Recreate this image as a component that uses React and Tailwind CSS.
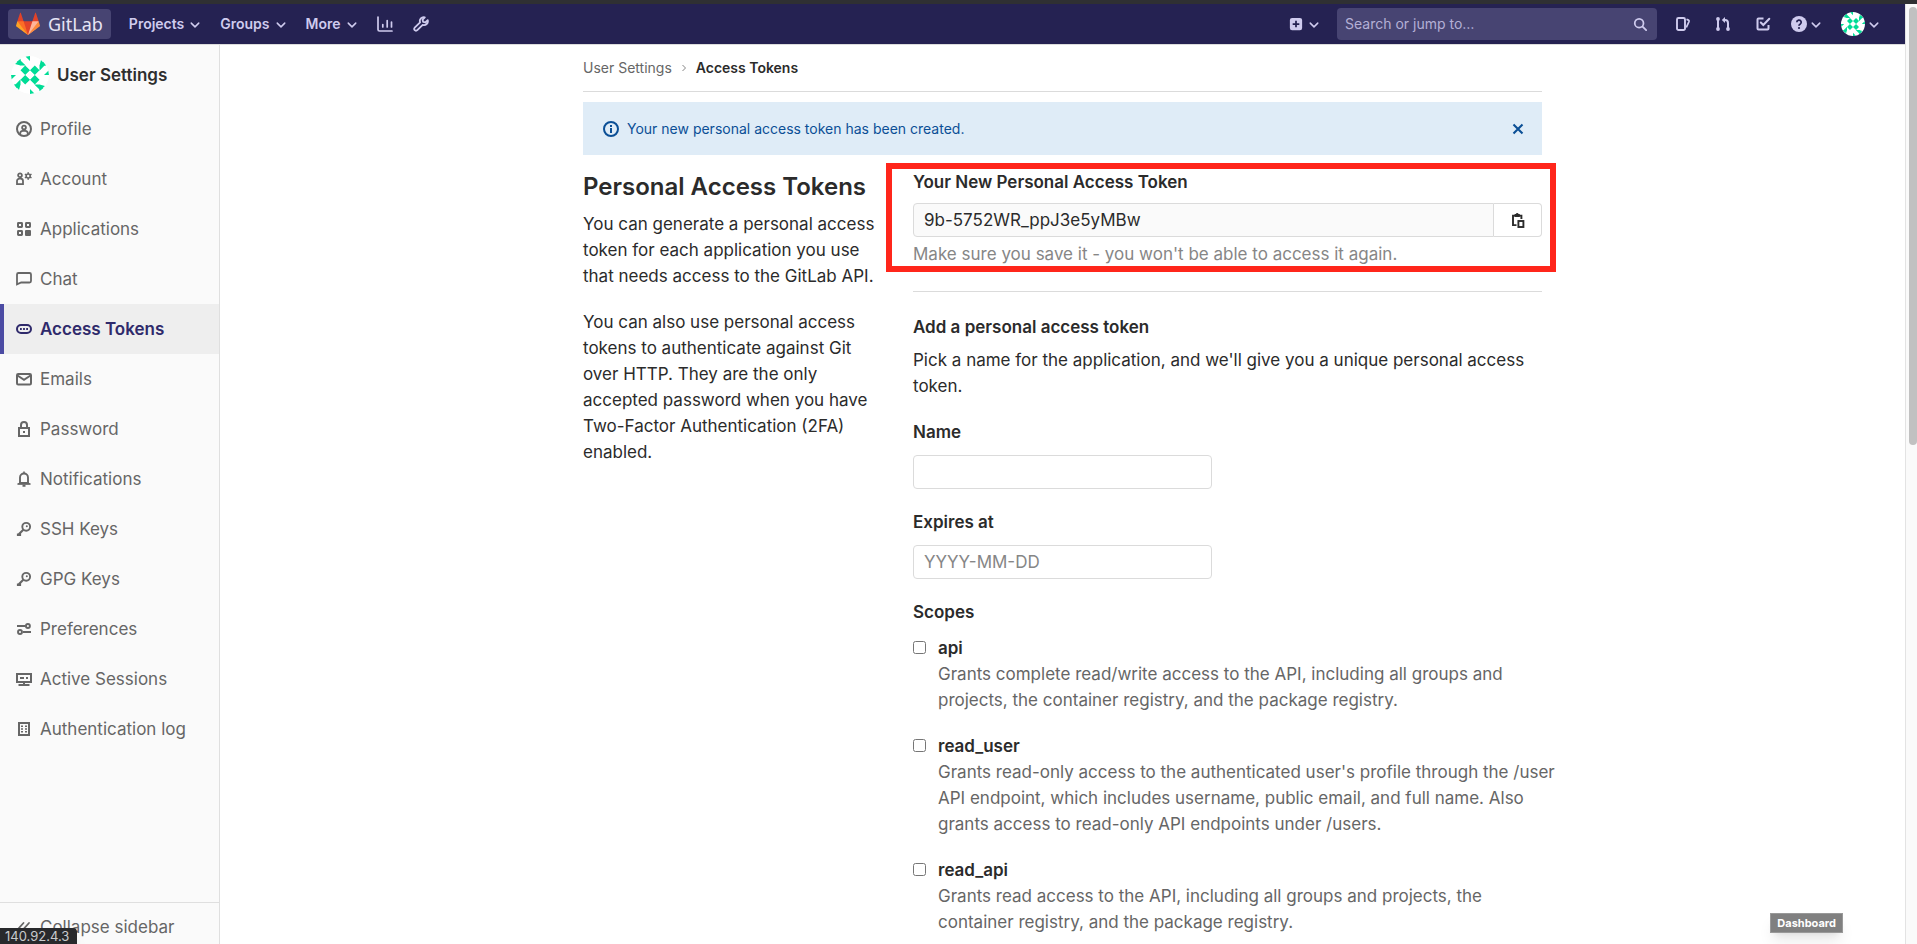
import React from "react";

function Svg({ size = 16, className = "", children }) {
  return (
    <svg
      viewBox="0 0 16 16"
      width={size}
      height={size}
      fill="none"
      stroke="currentColor"
      strokeWidth="2"
      aria-hidden="true"
      className={`shrink-0 ${className}`}
    >
      {children}
    </svg>
  );
}

const icons = {
  profile: (
    <>
      <circle cx="8" cy="8" r="7" />
      <circle cx="8" cy="6.6" r="1.9" strokeWidth="1.8" />
      <path d="M4.2 13.2V12.4a2.6 2.6 0 0 1 2.6-2.6h2.4a2.6 2.6 0 0 1 2.6 2.6v.8" strokeWidth="1.8" />
    </>
  ),
  account: (
    <>
      <circle cx="4" cy="4.3" r="1.9" strokeWidth="1.8" />
      <path d="M1 13.2V10a2.4 2.4 0 0 1 2.4-2.4h1.2A2.4 2.4 0 0 1 7 10v3.2z" strokeWidth="1.8" />
      <circle cx="12.2" cy="5" r="2" strokeWidth="1.6" />
      <path d="M12.2 1.2v1.6M12.2 7.2v1.6M8.9 3.1l1.4.8M14.1 6.1l1.4.8M8.9 6.9l1.4-.8M14.1 3.9l1.4-.8" strokeWidth="1.6" />
    </>
  ),
  applications: (
    <>
      <rect x="2" y="2" width="4" height="4" rx=".4" />
      <rect x="10" y="2" width="4" height="4" rx=".4" />
      <rect x="2" y="10" width="4" height="4" rx=".4" />
      <rect x="9" y="9" width="6" height="6" rx="1" fill="currentColor" stroke="none" />
    </>
  ),
  chat: <path d="M1 13.4V3.5A1.5 1.5 0 0 1 2.5 2h11A1.5 1.5 0 0 1 15 3.5v6.5a1.5 1.5 0 0 1-1.5 1.5H5.2z" strokeWidth="1.8" />,
  token: (
    <>
      <rect x="1" y="4" width="14" height="8" rx="4" />
      <path d="M4 8h1.8M7.1 8h1.8M10.2 8H12" />
    </>
  ),
  mail: (
    <>
      <rect x="1" y="3" width="14" height="10.5" rx="1.2" />
      <path d="M1.5 4.5L8 8.8l6.5-4.3" />
    </>
  ),
  lock: (
    <>
      <rect x="3" y="7" width="10" height="8" />
      <path d="M5 7V4a3 3 0 0 1 6 0v3" />
      <path d="M7 11h2" />
    </>
  ),
  bell: (
    <>
      <path d="M4 12V6.5a4 4 0 0 1 8 0V12" strokeWidth="1.9" />
      <path d="M1.5 13.2L3.8 11h8.4l2.3 2.2z" fill="currentColor" stroke="none" />
      <path d="M1.5 13h13" strokeWidth="1.6" />
      <path d="M5.5 11h5V9.5h-5z" fill="#fafafa" stroke="none" />
      <path d="M6.5 14.7h3M7.2 1.6h1.6" />
    </>
  ),
  key: (
    <>
      <circle cx="10.2" cy="5.8" r="3.9" strokeWidth="1.9" />
      <circle cx="10.8" cy="5.2" r="1" fill="currentColor" stroke="none" />
      <path d="M7.3 8.7L1.8 14.2M2 14.9v-2.5M1 14h3v-2.2" strokeWidth="2.2" />
    </>
  ),
  preferences: (
    <>
      <path d="M1 5h8M7 11h8" />
      <circle cx="11.9" cy="5" r="2" strokeWidth="1.9" />
      <circle cx="4" cy="11" r="2" strokeWidth="1.9" />
    </>
  ),
  monitor: (
    <>
      <rect x="1" y="3" width="14" height="8" />
      <path d="M8 11v3M2.5 14h11M4 7h4M10 7h2" />
    </>
  ),
  log: (
    <>
      <rect x="3" y="2" width="10" height="12" />
      <path d="M5 5.2h2M9 5.2h2M5 8h2M9 8h2M5 10.8h2M9 10.8h2" strokeWidth="1.6" />
    </>
  ),
};

function Chevron() {
  return (
    <Svg size={10} className="mt-0.5">
      <path d="M2 5l6 6 6-6" strokeWidth="2.4" strokeLinecap="round" strokeLinejoin="round" />
    </Svg>
  );
}

function Identicon({ className }) {
  return (
    <svg viewBox="0 0 38 38" aria-hidden="true" className={className}>
      <circle cx="19" cy="19" r="19" fill="#fff" />
      <g fill="#00dc96">
        <path d="M14.2 9.5l4.8 4.7-4.8 4.8-4.7-4.8zM23.8 9.5l4.7 4.7-4.7 4.8-4.8-4.8zM14.2 19l4.8 4.8-4.8 4.7-4.7-4.7zM23.8 19l4.7 4.8-4.7 4.7-4.8-4.7z" />
        {[0, 90, 180, 270].map((angle) => (
          <g key={angle} transform={`rotate(${angle} 19 19)`}>
            <path d="M14.5 .4L19 0v5zM9.5 4.5l5.2 5H9.5zM30 4l4.5 5.500H28.500zM5.500 6L9.500 2.800v6.700z" />
          </g>
        ))}
      </g>
    </svg>
  );
}

function Tanuki() {
  return (
    <svg viewBox="0 0 36 36" aria-hidden="true" className="size-6 shrink-0">
      <path fill="#e24329" d="M2 14l9.38 9v-9l-4-12.28c-.205-.632-1.176-.632-1.38 0z" />
      <path fill="#e24329" d="M34 14l-9.38 9v-9l4-12.28c.205-.632 1.176-.632 1.38 0z" />
      <path fill="#e24329" d="M18 34.38L3 14h30z" />
      <path fill="#fc6d26" d="M18 34.38L11.38 14H2l4 11z" />
      <path fill="#ffb59a" d="M18 34.38L24.62 14H34l-4 11z" />
      <path fill="#fca326" d="M2 14L.1 20.16c-.18.565 0 1.2.5 1.56l17.42 12.66z" />
      <path fill="#fc8a3c" d="M34 14l1.9 6.16c.18.565 0 1.2-.5 1.56L18 34.38z" />
    </svg>
  );
}

const navItems = [
  ["Profile", "profile"],
  ["Account", "account"],
  ["Applications", "applications"],
  ["Chat", "chat"],
  ["Access Tokens", "token"],
  ["Emails", "mail"],
  ["Password", "lock"],
  ["Notifications", "bell"],
  ["SSH Keys", "key"],
  ["GPG Keys", "key"],
  ["Preferences", "preferences"],
  ["Active Sessions", "monitor"],
  ["Authentication log", "log"],
];

const scopes = [
  ["api", "Grants complete read/write access to the API, including all groups and projects, the container registry, and the package registry."],
  ["read_user", "Grants read-only access to the authenticated user's profile through the /user API endpoint, which includes username, public email, and full name. Also grants access to read-only API endpoints under /users."],
  ["read_api", "Grants read access to the API, including all groups and projects, the container registry, and the package registry."],
];

function Navbar() {
  return (
    <header className="flex h-[41px] shrink-0 items-center justify-between border-b border-[#dcdcdc] bg-[#252252] pr-[26px] pl-2 text-[#cfcbee]">
      <div className="flex items-center">
        <a href="#home" className="flex h-[30px] items-center gap-2 rounded bg-[#474472] px-2 font-['Noto_Sans',sans-serif] text-[18px] leading-6 text-[#e6e4f5]">
          <Tanuki />
          GitLab
        </a>
        <nav aria-label="Main" className="ml-[18px] flex items-center gap-5 text-sm font-semibold">
          {["Projects", "Groups", "More"].map((label) => (
            <button key={label} type="button" className="flex items-center gap-1.5">
              {label}
              <Chevron />
            </button>
          ))}
          <a href="#analytics" aria-label="Analytics">
            <Svg>
              <path d="M1 1v12.5A1.5 1.5 0 0 0 2.5 15H15" strokeLinecap="round" strokeWidth="1.7" />
              <path d="M5.8 8.5v2.5M10.2 4.5V11M14.5 6v5" strokeLinecap="round" strokeWidth="1.7" />
            </Svg>
          </a>
          <a href="#admin" aria-label="Admin area">
            <Svg>
              <path
                d="M11.8 1.3a3.8 3.8 0 0 0-4.7 5L1.7 11.6a1.8 1.8 0 0 0 0 2.6 1.8 1.8 0 0 0 2.6 0l5.4-5.4a3.8 3.8 0 0 0 5-4.7l-2.4 2.2-2.2-.4-.5-2.2z"
                strokeWidth="1.8"
                strokeLinejoin="round"
              />
            </Svg>
          </a>
        </nav>
      </div>
      <div className="flex items-center">
        <button type="button" aria-label="New" className="flex items-center gap-1.5">
          <Svg size={14}>
            <rect x="1" y="1" width="14" height="14" rx="2.5" fill="currentColor" stroke="none" />
            <path d="M8 4.2v7.6M4.2 8h7.6" stroke="#252252" />
          </Svg>
          <Chevron />
        </button>
        <div className="ml-[18px] flex h-8 w-[320px] items-center rounded bg-[#474472] pr-2.5 pl-2">
          <input aria-label="Search" placeholder="Search or jump to…" className="min-w-0 flex-1 bg-transparent text-sm outline-none placeholder:text-[#b4b0d6]" />
          <Svg size={14}>
            <circle cx="7" cy="7" r="5" />
            <path d="M11 11l4 4" strokeLinecap="round" />
          </Svg>
        </div>
        <div className="ml-[18px] flex items-center gap-6">
          <a href="#issues" aria-label="Issues">
            <Svg>
              <path d="M3.5 2h5A1.5 1.5 0 0 1 10 3.5v9A1.5 1.5 0 0 1 8.5 14h-5A1.5 1.5 0 0 1 2 12.5v-9A1.5 1.5 0 0 1 3.5 2z" strokeWidth="1.9" />
              <path d="M11.5 3.2l1.9.9a1.2 1.2 0 0 1 .6 1.4L11.3 11.5" strokeWidth="1.8" />
            </Svg>
          </a>
          <a href="#merge-requests" aria-label="Merge requests">
            <Svg>
              <path d="M3 4v9M13 13V7a3 3 0 0 0-3-3H8" />
              <path d="M10 1v6L6.8 4z" fill="currentColor" stroke="none" />
              <circle cx="3" cy="3" r="1.9" fill="currentColor" stroke="none" />
              <circle cx="3" cy="13" r="1.9" fill="currentColor" stroke="none" />
              <circle cx="13" cy="13" r="1.9" fill="currentColor" stroke="none" />
            </Svg>
          </a>
          <a href="#todos" aria-label="To-Do list">
            <Svg>
              <path d="M8.5 2.5h-5a1 1 0 0 0-1 1v9a1 1 0 0 0 1 1h9a1 1 0 0 0 1-1V9" />
              <path d="M5.8 6.5L8.3 9l6-6.3" strokeLinecap="round" />
            </Svg>
          </a>
        </div>
        <div className="ml-5 flex items-center gap-5">
          <button type="button" aria-label="Help" className="flex items-center gap-1">
            <Svg>
              <circle cx="8" cy="8" r="8" fill="currentColor" stroke="none" />
              <path d="M5.8 6.3a2.2 2.2 0 1 1 3.3 1.9c-.7.4-1.1.7-1.1 1.5" stroke="#252252" strokeWidth="1.8" />
              <circle cx="8" cy="12" r="1.1" fill="#252252" stroke="none" />
            </Svg>
            <Chevron />
          </button>
          <button type="button" aria-label="User menu" className="flex items-center gap-1">
            <Identicon className="size-6" />
            <Chevron />
          </button>
        </div>
      </div>
    </header>
  );
}

function Sidebar() {
  return (
    <aside className="flex w-[220px] shrink-0 flex-col border-r border-[#dfdfdf] bg-[#fafafa] text-[17px] leading-[26px] text-[#666]">
      <a href="#settings" className="flex h-[59px] items-center gap-2 pl-[11px] font-semibold text-[#2e2e2e]">
        <Identicon className="size-[38px] rounded-full" />
        User Settings
      </a>
      <nav aria-label="User settings" className="flex-1">
        {navItems.map(([label, icon]) => {
          const active = label === "Access Tokens";
          return (
            <a
              key={label}
              href="#nav"
              aria-current={active ? "page" : undefined}
              className={
                active
                  ? "flex h-[50px] items-center gap-2 border-l-4 border-[#4b4ba3] bg-[#eeeeee] pl-3 font-semibold text-[#2f2a6b]"
                  : "flex h-[50px] items-center gap-2 pl-4"
              }
            >
              <Svg>{icons[icon]}</Svg>
              {label}
            </a>
          );
        })}
      </nav>
      <button type="button" className="flex h-[42px] shrink-0 items-start gap-2 border-t border-[#dfdfdf] pt-[11px] pl-4">
        <Svg className="mt-1.5">
          <path d="M7.5 3L3 8l4.5 5M13 3L8.5 8l4.5 5" strokeWidth="1.8" strokeLinecap="round" />
        </Svg>
        Collapse sidebar
      </button>
    </aside>
  );
}

const field = "block h-[34px] rounded border border-[#dbdbdb] px-2.5 placeholder:text-[#868686]";

function TokenForm() {
  return (
    <div className="min-w-0 flex-1">
      <section className="relative">
        <label htmlFor="token" className="block font-semibold">
          Your New Personal Access Token
        </label>
        <div className="mt-2 flex">
          <input id="token" readOnly value="9b-5752WR_ppJ3e5yMBw" className="h-[34px] min-w-0 flex-1 rounded-l border border-[#dbdbdb] bg-[#fafafa] px-2.5" />
          <button type="button" aria-label="Copy personal access token" className="flex h-[34px] w-12 items-center justify-center rounded-r border border-l-0 border-[#dbdbdb]">
            <Svg>
              <path d="M6.5 13.1H3V3.6h8.4V7" strokeWidth="1.9" />
              <path d="M4.6 2h1.2a1.5 1.5 0 0 1 2.8 0h1.2v3H4.6z" fill="currentColor" stroke="none" />
              <rect x="8.4" y="9" width="5" height="6" strokeWidth="1.9" />
            </Svg>
          </button>
        </div>
        <p className="mt-1 text-[#868686]">Make sure you save it - you won't be able to access it again.</p>
        <div className="pointer-events-none absolute -top-1.5 -right-3.5 -bottom-[5px] -left-[27px] border-[6px] border-[#ff261b]" />
      </section>
      <hr className="mt-6 mb-[22px] border-[#dbdbdb]" />
      <form>
        <h2 className="font-semibold">Add a personal access token</h2>
        <p className="mt-[7px]">Pick a name for the application, and we'll give you a unique personal access token.</p>
        <label htmlFor="name" className="mt-5 mb-2.5 block font-semibold">Name</label>
        <input id="name" className={`${field} w-[299px]`} />
        <label htmlFor="expires" className="mt-5 mb-2.5 block font-semibold">Expires at</label>
        <input id="expires" placeholder="YYYY-MM-DD" className={`${field} w-[299px]`} />
        <fieldset className="-mr-4 mt-5">
          <legend className="mb-2.5 font-semibold">Scopes</legend>
          <div className="flex flex-col gap-5">
            {scopes.map(([name, description]) => (
              <div key={name} className="flex items-start gap-3">
                <input id={name} type="checkbox" aria-describedby={`${name}-help`} className="mt-1.5 size-[13px] shrink-0" />
                <div>
                  <label htmlFor={name} className="block font-semibold">{name}</label>
                  <p id={`${name}-help`} className="text-[#666]">{description}</p>
                </div>
              </div>
            ))}
          </div>
        </fieldset>
      </form>
    </div>
  );
}

export default function App() {
  return (
    <div className="relative flex h-screen flex-col overflow-hidden bg-white font-['Inter',sans-serif] text-[#2b2b2b]">
      <div className="h-1 shrink-0 bg-[#2f3033]" />
      <div className="flex min-h-0 flex-1">
        <div className="flex min-w-0 flex-1 flex-col">
          <Navbar />
          <div className="flex min-h-0 flex-1">
            <Sidebar />
            <main className="min-w-0 flex-1 overflow-hidden">
              <div className="mx-auto max-w-[959px] text-[17px] leading-[26px]">
                <nav aria-label="Breadcrumb" className="flex h-[47px] items-center gap-2 border-b border-[#dbdbdb] text-sm">
                  <a href="#settings" className="text-[#666]">User Settings</a>
                  <Svg size={8} className="text-[#868686]">
                    <path d="M5 2l6 6-6 6" />
                  </Svg>
                  <a href="#tokens" className="font-semibold">Access Tokens</a>
                </nav>
                <div role="status" className="mt-2.5 flex h-[53px] items-center gap-2 bg-[#dfecf7] pr-[18px] pl-5 text-sm text-[#0b4f96]">
                  <Svg>
                    <circle cx="8" cy="8" r="7" />
                    <path d="M8 7v5M8 4v2" />
                  </Svg>
                  <p className="flex-1">Your new personal access token has been created.</p>
                  <button type="button" aria-label="Dismiss">
                    <Svg size={12}>
                      <path d="M2 2l12 12M14 2L2 14" strokeWidth="2.8" />
                    </Svg>
                  </button>
                </div>
                <div className="mt-3.5 flex gap-9">
                  <div className="w-[294px] shrink-0">
                    <h1 className="mt-0.5 text-2xl leading-8 font-semibold">Personal Access Tokens</h1>
                    <p className="mt-2">You can generate a personal access token for each application you use that needs access to the GitLab API.</p>
                    <p className="mt-5">You can also use personal access tokens to authenticate against Git over HTTP. They are the only accepted password when you have Two-Factor Authentication (2FA) enabled.</p>
                  </div>
                  <TokenForm />
                </div>
              </div>
            </main>
          </div>
        </div>
        <div className="w-3 shrink-0 border-l border-[#e3e3e3] bg-[#fafafa] pt-[3px] pl-[3px]">
          <div className="h-[438px] rounded-full bg-[#c1c1c1]" />
        </div>
      </div>
      <div className="absolute bottom-0 left-0 rounded-tr bg-[#28292c] pr-2 pl-[5px] text-[13px] leading-4 text-[#c8cacd] shadow-lg">140.92.4.3</div>
      <div className="absolute right-[74px] bottom-[11px] flex h-5 items-center border border-[#999] bg-[#808080] px-1.5 text-[11px] font-bold text-white shadow-lg">Dashboard</div>
    </div>
  );
}
